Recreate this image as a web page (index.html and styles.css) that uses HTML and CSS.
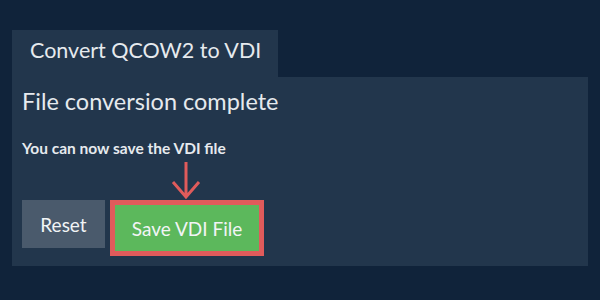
FILE: index.html
```html
<!DOCTYPE html>
<html>
<head>
<meta charset="utf-8">
<link rel="stylesheet" href="styles.css">
</head>
<body>
<div class="wrap">
  <div class="tab">Convert QCOW2 to VDI</div>
  <div class="panel">
    <h2 class="title">File conversion complete</h2>
    <p class="msg">You can now save the VDI file</p>
    <div class="actions">
      <button class="btn reset">Reset</button>
      <div class="save-wrap">
        <svg class="arrow" width="30" height="40" viewBox="0 0 30 40">
          <path d="M15 2 V37 M2 22 L15 37 L28 22" fill="none" stroke="#e05b5b" stroke-width="3"/>
        </svg>
        <button class="btn save">Save VDI File</button>
      </div>
    </div>
  </div>
</div>
</body>
</html>
```

FILE: styles.css
```css
html, body {
  margin: 0;
  padding: 0;
}
body {
  background: #10233a;
  width: 600px;
  height: 300px;
  font-family: Lato, "Noto Sans", sans-serif;
  color: #e6eaee;
}
.wrap {
  padding: 30px 12px 0 12px;
}
.tab {
  display: block;
  background: #22364c;
  height: 47px;
  line-height: 40px;
  padding: 0 0 0 18px;
  font-size: 21.5px;
  box-sizing: border-box;
  width: 266px;
  white-space: nowrap;
}
.panel {
  background: #22364c;
  height: 189px;
  padding: 10px 10px 0 10px;
  box-sizing: border-box;
}
.title {
  margin: 0;
  font-weight: 400;
  font-size: 23.5px;
  line-height: 28px;
}
.msg {
  margin: 24px 0 0 0;
  font-weight: 700;
  font-size: 15.5px;
  line-height: 18px;
}
.actions {
  display: flex;
  align-items: flex-start;
  margin-top: 43px;
  gap: 5px;
}
.btn {
  font-family: Lato, "Noto Sans", sans-serif;
  border: none;
  color: #f2f4f6;
  font-size: 19px;
  margin: 0;
  padding: 0;
  cursor: pointer;
}
.reset {
  background: #4a5a6c;
  width: 83px;
  height: 48px;
}
.save-wrap {
  position: relative;
}
.arrow {
  position: absolute;
  left: 61px;
  top: -40px;
}
.save {
  background: #5cb85c;
  border: 5px solid #e05b5b;
  width: 154px;
  height: 56px;
  box-sizing: border-box;
}
```
